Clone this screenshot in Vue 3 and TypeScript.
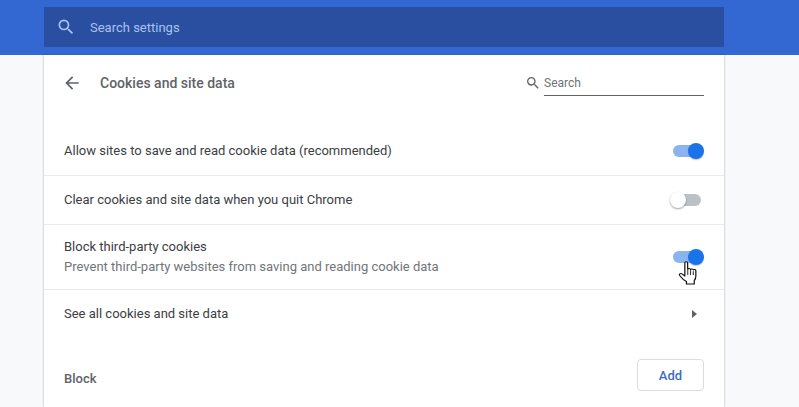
<script setup lang="ts">
const rows = [
  { label: 'Allow sites to save and read cookie data (recommended)', on: true },
  { label: 'Clear cookies and site data when you quit Chrome', on: false },
  {
    label: 'Block third-party cookies',
    sub: 'Prevent third-party websites from saving and reading cookie data',
    on: true,
    pointer: true,
  },
]
</script>

<template>
  <div class="page">
    <header class="toolbar">
      <div class="search-settings">
        <svg class="search-icon" width="20" height="20" viewBox="0 0 24 24">
          <path
            fill="#a9c1f0"
            d="M15.5 14h-.79l-.28-.27A6.47 6.47 0 0 0 16 9.5 6.5 6.5 0 1 0 9.5 16c1.61 0 3.09-.59 4.23-1.57l.27.28v.79l5 4.99L20.49 19l-4.99-5zm-6 0C7.01 14 5 11.99 5 9.5S7.01 5 9.5 5 14 7.01 14 9.5 11.99 14 9.5 14z"
          />
        </svg>
        <span class="search-text">Search settings</span>
      </div>
    </header>

    <main class="card">
      <div class="title-row">
        <svg class="back" width="20" height="20" viewBox="0 0 24 24">
          <path fill="#5f6368" d="M20 11H7.830l5.590-5.590L12 4l-8 8 8 8 1.410-1.410L7.830 13H20v-2z" />
        </svg>
        <h1 class="title">Cookies and site data</h1>
        <div class="subsearch">
          <svg width="16" height="16" viewBox="0 0 24 24">
            <path
              fill="#5f6368"
              d="M15.5 14h-.79l-.28-.27A6.47 6.47 0 0 0 16 9.5 6.5 6.5 0 1 0 9.5 16c1.61 0 3.09-.59 4.23-1.57l.27.28v.79l5 4.99L20.49 19l-4.99-5zm-6 0C7.01 14 5 11.99 5 9.5S7.01 5 9.5 5 14 7.01 14 9.5 11.99 14 9.5 14z"
            />
          </svg>
          <span class="subsearch-field">Search</span>
        </div>
      </div>

      <div v-for="row in rows" :key="row.label" class="row" :class="{ tall: row.sub }">
        <div class="row-text">
          <div class="label">{{ row.label }}</div>
          <div v-if="row.sub" class="sub">{{ row.sub }}</div>
        </div>
        <div class="toggle" :class="{ on: row.on }">
          <span class="track"></span>
          <span class="knob"></span>
          <svg
            v-if="row.pointer"
            class="cursor"
            width="22"
            height="24"
            viewBox="0 0 18 23"
            preserveAspectRatio="none"
          >
            <path
              fill="#fff"
              stroke="#111"
              stroke-width="1"
              stroke-linejoin="round"
              d="M5.600 1.900c0-1.500 2.300-1.500 2.300 0v6c.4-1 2.100-.9 2.300.3.400-.9 2.100-.8 2.300.4.500-.7 2-.5 2.100.8v4.900c0 2.200-.5 3.400-1.300 4.500v3.200H6.900v-2.300C5 18.700 3 16.400 1.400 13.900c-.9-1.500.9-2.700 2.200-1.400l2 1.900V1.900z"
            />
            <path stroke="#111" stroke-width=".8" d="M8 8.500v5M10.300 8.800v4.700M12.500 9.800v3.700" />
          </svg>
        </div>
      </div>

      <div class="row link-row">
        <div class="label">See all cookies and site data</div>
        <span class="arrow"></span>
      </div>

      <div class="block-row">
        <h2 class="block-title">Block</h2>
        <button class="add">Add</button>
      </div>
    </main>
  </div>
</template>

<style scoped>
.page {
  width: 799px;
  height: 407px;
  overflow: hidden;
  background: #f8f9fa;
  font-family: Roboto, "Liberation Sans", sans-serif;
  font-size: 13px;
}

.toolbar {
  height: 55px;
  box-sizing: border-box;
  padding: 7px 75px 0 44px;
  background: #3367d1;
}

.search-settings {
  display: flex;
  align-items: center;
  height: 40px;
  padding-left: 12px;
  border-radius: 1px;
  background: #2a4fa0;
}

.search-icon {
  flex: none;
}

.search-text {
  margin-left: 14px;
  color: #a9c1f0;
  font-size: 13px;
}

.card {
  width: 680px;
  height: 352px;
  margin-left: 44px;
  background: #fff;
  box-shadow: 0 0 2px rgba(60, 64, 67, 0.45);
}

.title-row {
  display: flex;
  align-items: center;
  height: 56px;
  padding: 0 20px 0 18px;
  margin-bottom: 16px;
}

.back {
  flex: none;
}

.title {
  margin: 0 0 0 18px;
  color: #5f6368;
  font-size: 14px;
  font-weight: 500;
}

.subsearch {
  display: flex;
  align-items: center;
  margin-left: auto;
  gap: 3px;
}

.subsearch-field {
  display: block;
  width: 160px;
  height: 25px;
  box-sizing: border-box;
  border-bottom: 1px solid #5f6368;
  color: #6f7377;
  font-size: 12px;
  line-height: 24px;
}

.row {
  display: flex;
  align-items: center;
  justify-content: space-between;
  height: 49px;
  box-sizing: border-box;
  padding: 0 23px 0 20px;
  border-bottom: 1px solid #e8eaed;
}

.row.tall {
  height: 65px;
}

.label {
  color: #3c4043;
  line-height: 20px;
}

.sub {
  color: #70757a;
  line-height: 20px;
}

.toggle {
  position: relative;
  flex: none;
  width: 28px;
  height: 12px;
}

.track {
  display: block;
  width: 100%;
  height: 100%;
  border-radius: 6px;
  background: #bdc1c6;
}

.knob {
  position: absolute;
  top: -2px;
  left: -3px;
  width: 16px;
  height: 16px;
  border-radius: 50%;
  background: #fff;
  box-shadow: 0 1px 2px rgba(60, 64, 67, 0.5);
}

.toggle.on .track {
  background: #8ab4f0;
}

.toggle.on .knob {
  left: 15px;
  background: #1a73e8;
  box-shadow: 0 1px 1px rgba(60, 64, 67, 0.3);
}

.cursor {
  position: absolute;
  top: 10px;
  left: 5px;
}

.link-row {
  height: 47px;
  padding-right: 20px;
  border-bottom: 0;
}

.arrow {
  width: 0;
  height: 0;
  margin-right: 7px;
  border-left: 5px solid #5f6368;
  border-top: 4px solid transparent;
  border-bottom: 4px solid transparent;
}

.block-row {
  display: flex;
  align-items: flex-start;
  justify-content: space-between;
  height: 32px;
  margin-top: 22px;
  padding: 0 20px;
}

.block-title {
  margin: 12px 0 0;
  color: #5f6368;
  font-size: 13px;
  font-weight: 500;
}

.add {
  width: 67px;
  height: 32px;
  box-sizing: border-box;
  border: 1px solid #dadce0;
  border-radius: 4px;
  background: #fff;
  color: #3d6cc0;
  font-family: inherit;
  font-size: 13px;
  font-weight: 500;
}
</style>
